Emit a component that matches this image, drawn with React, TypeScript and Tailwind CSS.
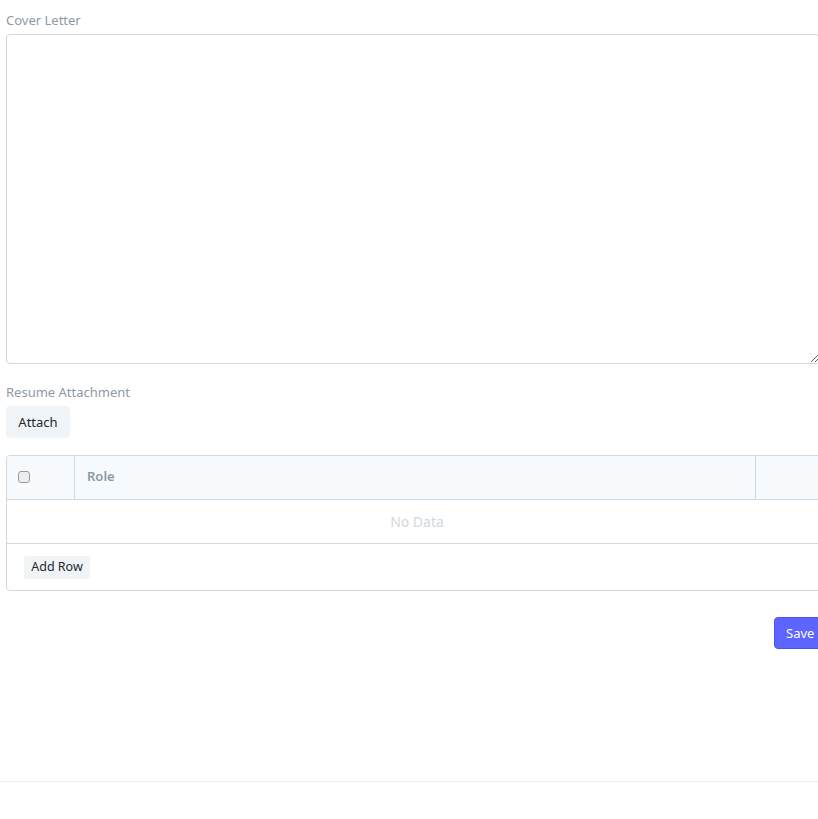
import React from "react";

export default function App() {
  return (
    <div className="min-h-[819px] bg-white overflow-hidden" style={{ fontFamily: '"Noto Sans", "Open Sans", sans-serif' }}>
      <div className="w-[822px] ml-[6px] pt-[11px]">
        <div className="text-[13px] leading-[18px] text-[#8d99a6]">Cover Letter</div>
        <textarea className="mt-[5px] block w-[814px] h-[330px] border border-[#d1d8dd] rounded-[4px] bg-white outline-none" />
        <div className="mt-[19px] text-[13px] leading-[18px] text-[#8d99a6]">Resume Attachment</div>
        <button className="mt-[5px] h-[32px] w-[64px] rounded-[4px] bg-[#f0f4f7] text-[13px] leading-[32px] text-[#1f272e]">Attach</button>
        <div className="mt-[17px] border border-[#d1d8dd] rounded-[4px] overflow-hidden">
          <div className="flex h-[44px] bg-[#f7fafc] border-b border-[#d1d8dd]">
            <div className="w-[68px] flex items-center pl-[11px] pb-[2px] border-r border-[#d1d8dd]">
              <div className="w-[12px] h-[12px] rounded-[3px] border border-[#9a9a9a] bg-[#ededed]" />
            </div>
            <div className="w-[681px] flex items-center pl-[12px] pb-[2px] border-r border-[#d1d8dd] text-[13px] font-semibold text-[#8d99a6]">Role</div>
            <div className="flex-1" />
          </div>
          <div className="h-[44px] flex items-center justify-center border-b border-[#d1d8dd] text-[14px] text-[#d1d8dd]">No Data</div>
          <div className="h-[46px] flex items-center pl-[17px]">
            <button className="h-[23px] w-[66px] rounded-[3px] bg-[#f0f4f7] text-[12.5px] text-[#1f272e]">Add Row</button>
          </div>
        </div>
        <div className="flex justify-end mt-[26px]">
          <button className="h-[32px] w-[54px] pl-[11px] pt-[1px] text-left rounded-[4px] bg-[#5e64ff] border border-[#4c52f0] text-[13px] text-white">Save</button>
        </div>
      </div>
      <div className="mt-[132px] border-t border-[#ebeef0]" />
    </div>
  );
}
